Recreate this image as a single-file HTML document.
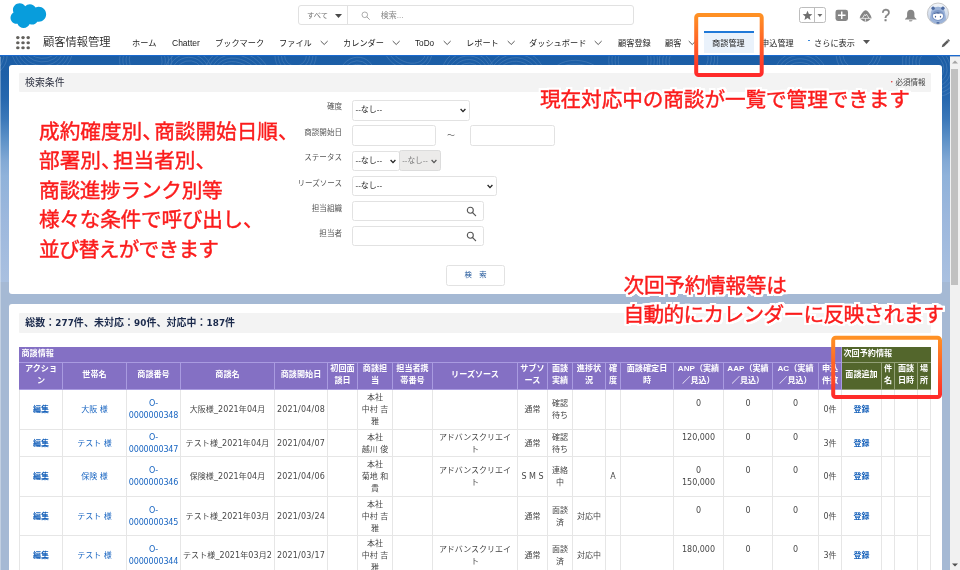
<!DOCTYPE html>
<html lang="ja">
<head>
<meta charset="utf-8">
<title>顧客情報管理</title>
<style>
*{box-sizing:border-box;margin:0;padding:0}
html,body{width:960px;height:570px;overflow:hidden;background:#a5b9d4}
body{position:relative;will-change:transform;font-family:"Liberation Sans","Noto Sans CJK JP",sans-serif;color:#333;font-size:8px}
.abs{position:absolute}
#hdr{position:absolute;left:0;top:0;width:960px;height:54.600px;background:#fff}
#brandline{position:absolute;left:0;top:54.600px;width:960px;height:1.700px;background:#1a6ad0}
#bg{position:absolute;left:0;top:56px;width:950px;height:226px;background:linear-gradient(#1b5da5 0,#1e60a8 20px,#2667ae 42px,#3b78b9 63px,#5e92c8 84px,#82a9d5 105px,#8fb2da 120px,#9db8dd 164px,#a9c0e0 226px)}
#bgpat{position:absolute;left:0;top:56px;width:950px;height:120px;opacity:.17}
.card{position:absolute;left:8.500px;width:933.500px;background:#fff;border-radius:3px}
.bar{position:absolute;left:19.200px;width:911.800px;background:#f3f3f3;border-radius:1px}
.nav{position:absolute;top:37.500px;font-size:8.2px;line-height:11px;color:#222;white-space:nowrap}
.chev{position:absolute;top:40.300px;width:8.400px;height:6.300px}
.lbl{position:absolute;width:120px;left:222px;text-align:right;font-size:7.55px;color:#565656;line-height:10px;white-space:nowrap}
.inp{position:absolute;height:20.500px;border:1px solid #e2e2e2;border-radius:2.5px;background:#fff;font-size:8px;line-height:18.500px;padding-left:2.500px;color:#222;white-space:nowrap}
.inp .ar{position:absolute;right:2.600px;top:7px;width:6px;height:5px}
.red{position:absolute;color:#fb1c1c;font-family:"Liberation Sans","Noto Sans CJK JP",sans-serif;font-weight:400;white-space:nowrap;-webkit-text-stroke:.42px #fb1c1c;filter:url(#halo)}
.red i{font-style:normal;margin-right:-.42em}
.sum b{font-size:8.800px}
.box{position:absolute;border:3.5px solid;border-image:linear-gradient(#ff8f1f,#ff2d2d) 1;border-radius:4px}
table{position:absolute;left:19px;top:346.700px;border-collapse:collapse;table-layout:fixed;width:912px;font-family:"DejaVu Sans","Noto Sans CJK JP",sans-serif;font-size:8px;line-height:12px}
td,th{border:1px solid #e6e6e6;text-align:center;vertical-align:middle;overflow:hidden;padding:1.400px 0 0;font-weight:400;color:#484848;white-space:nowrap}
td:nth-child(3){letter-spacing:-.15px}td:nth-child(4){letter-spacing:.1px}td:nth-child(5){letter-spacing:.2px}
th{background:#8470c4;color:#fff;font-weight:700;font-family:"Liberation Sans","Noto Sans CJK JP",sans-serif;border-color:#a99be0;font-size:8.1px;line-height:12.2px;padding:0}
th.g{background:#53662c;border-color:#93a077}
tr.h1 th{text-align:left;padding-left:1.500px;height:15px;padding-bottom:2px}
tr.h2 th{padding-bottom:1px}
tr.h1 th{border-top-color:#8470c4}tr.h1 th.g{border-top-color:#53662c;border-right-color:#53662c}th:first-child{border-left-color:#8470c4}tr.h2 th:last-child{border-right-color:#53662c}
a{color:#1a66c2;text-decoration:none}
td.b a{font-weight:700;color:#1560ba}
td.n{vertical-align:top;padding-top:5px}
</style>
</head>
<body>
<svg width="0" height="0" style="position:absolute"><defs><filter id="halo" x="-5%" y="-15%" width="110%" height="130%" color-interpolation-filters="sRGB"><feMorphology in="SourceAlpha" operator="dilate" radius="1.900" result="d"/><feGaussianBlur in="d" stdDeviation=".75" result="b"/><feComponentTransfer in="b" result="b2"><feFuncA type="linear" slope="1.600" intercept="0"/></feComponentTransfer><feFlood flood-color="#fff"/><feComposite in2="b2" operator="in" result="h"/><feMerge><feMergeNode in="h"/><feMergeNode in="SourceGraphic"/></feMerge></filter></defs></svg>
<div id="bg"></div>
<svg id="bgpat" width="950" height="120" viewBox="0 0 950 120" fill="none" stroke="#fff" stroke-width=".7"><ellipse cx="-10.3" cy="-2.5" rx="10.9" ry="13.4" transform="rotate(-11 -10.3 -2.5)"/><ellipse cx="-10.3" cy="-2.5" rx="14.1" ry="17.0" transform="rotate(-11 -10.3 -2.5)"/><ellipse cx="-10.3" cy="-2.5" rx="17.3" ry="20.6" transform="rotate(-11 -10.3 -2.5)"/><ellipse cx="42.0" cy="-8.1" rx="15.0" ry="10.4" transform="rotate(4 42.0 -8.1)"/><ellipse cx="42.0" cy="-8.1" rx="18.2" ry="14.0" transform="rotate(4 42.0 -8.1)"/><ellipse cx="42.0" cy="-8.1" rx="21.4" ry="17.6" transform="rotate(4 42.0 -8.1)"/><ellipse cx="42.0" cy="-8.1" rx="24.6" ry="21.2" transform="rotate(4 42.0 -8.1)"/><ellipse cx="42.0" cy="-8.1" rx="27.8" ry="24.8" transform="rotate(4 42.0 -8.1)"/><ellipse cx="42.0" cy="-8.1" rx="31.0" ry="28.4" transform="rotate(4 42.0 -8.1)"/><ellipse cx="90.5" cy="37.4" rx="16.9" ry="12.0" transform="rotate(38 90.5 37.4)"/><ellipse cx="90.5" cy="37.4" rx="20.1" ry="15.6" transform="rotate(38 90.5 37.4)"/><ellipse cx="90.5" cy="37.4" rx="23.3" ry="19.2" transform="rotate(38 90.5 37.4)"/><ellipse cx="145.7" cy="4.5" rx="16.5" ry="13.7" transform="rotate(5 145.7 4.5)"/><ellipse cx="145.7" cy="4.5" rx="19.7" ry="17.3" transform="rotate(5 145.7 4.5)"/><ellipse cx="145.7" cy="4.5" rx="22.9" ry="20.9" transform="rotate(5 145.7 4.5)"/><ellipse cx="145.7" cy="4.5" rx="26.1" ry="24.5" transform="rotate(5 145.7 4.5)"/><ellipse cx="188.5" cy="18.6" rx="14.5" ry="13.5" transform="rotate(-35 188.5 18.6)"/><ellipse cx="188.5" cy="18.6" rx="17.7" ry="17.1" transform="rotate(-35 188.5 18.6)"/><ellipse cx="188.5" cy="18.6" rx="20.9" ry="20.7" transform="rotate(-35 188.5 18.6)"/><ellipse cx="188.5" cy="18.6" rx="24.1" ry="24.3" transform="rotate(-35 188.5 18.6)"/><ellipse cx="238.3" cy="24.0" rx="19.3" ry="12.7" transform="rotate(34 238.3 24.0)"/><ellipse cx="238.3" cy="24.0" rx="22.5" ry="16.3" transform="rotate(34 238.3 24.0)"/><ellipse cx="238.3" cy="24.0" rx="25.7" ry="19.9" transform="rotate(34 238.3 24.0)"/><ellipse cx="238.3" cy="24.0" rx="28.9" ry="23.5" transform="rotate(34 238.3 24.0)"/><ellipse cx="238.3" cy="24.0" rx="32.1" ry="27.1" transform="rotate(34 238.3 24.0)"/><ellipse cx="238.3" cy="24.0" rx="35.3" ry="30.7" transform="rotate(34 238.3 24.0)"/><ellipse cx="295.5" cy="-1.0" rx="11.0" ry="11.0" transform="rotate(-0 295.5 -1.0)"/><ellipse cx="295.5" cy="-1.0" rx="14.2" ry="14.6" transform="rotate(-0 295.5 -1.0)"/><ellipse cx="295.5" cy="-1.0" rx="17.4" ry="18.2" transform="rotate(-0 295.5 -1.0)"/><ellipse cx="295.5" cy="-1.0" rx="20.6" ry="21.8" transform="rotate(-0 295.5 -1.0)"/><ellipse cx="356.8" cy="20.4" rx="11.4" ry="12.2" transform="rotate(21 356.8 20.4)"/><ellipse cx="356.8" cy="20.4" rx="14.6" ry="15.8" transform="rotate(21 356.8 20.4)"/><ellipse cx="356.8" cy="20.4" rx="17.8" ry="19.4" transform="rotate(21 356.8 20.4)"/><ellipse cx="407.5" cy="-8.0" rx="19.2" ry="13.7" transform="rotate(30 407.5 -8.0)"/><ellipse cx="407.5" cy="-8.0" rx="22.4" ry="17.3" transform="rotate(30 407.5 -8.0)"/><ellipse cx="407.5" cy="-8.0" rx="25.6" ry="20.9" transform="rotate(30 407.5 -8.0)"/><ellipse cx="468.1" cy="19.7" rx="10.8" ry="8.9" transform="rotate(-18 468.1 19.7)"/><ellipse cx="468.1" cy="19.7" rx="14.0" ry="12.5" transform="rotate(-18 468.1 19.7)"/><ellipse cx="468.1" cy="19.7" rx="17.2" ry="16.1" transform="rotate(-18 468.1 19.7)"/><ellipse cx="468.1" cy="19.7" rx="20.4" ry="19.7" transform="rotate(-18 468.1 19.7)"/><ellipse cx="468.1" cy="19.7" rx="23.6" ry="23.3" transform="rotate(-18 468.1 19.7)"/><ellipse cx="468.1" cy="19.7" rx="26.8" ry="26.9" transform="rotate(-18 468.1 19.7)"/><ellipse cx="515.1" cy="26.6" rx="17.8" ry="17.9" transform="rotate(26 515.1 26.6)"/><ellipse cx="515.1" cy="26.6" rx="21.0" ry="21.5" transform="rotate(26 515.1 26.6)"/><ellipse cx="515.1" cy="26.6" rx="24.2" ry="25.1" transform="rotate(26 515.1 26.6)"/><ellipse cx="515.1" cy="26.6" rx="27.4" ry="28.7" transform="rotate(26 515.1 26.6)"/><ellipse cx="515.1" cy="26.6" rx="30.6" ry="32.3" transform="rotate(26 515.1 26.6)"/><ellipse cx="578.3" cy="23.4" rx="21.3" ry="11.6" transform="rotate(9 578.3 23.4)"/><ellipse cx="578.3" cy="23.4" rx="24.5" ry="15.2" transform="rotate(9 578.3 23.4)"/><ellipse cx="578.3" cy="23.4" rx="27.7" ry="18.8" transform="rotate(9 578.3 23.4)"/><ellipse cx="633.1" cy="4.4" rx="14.8" ry="17.2" transform="rotate(-0 633.1 4.4)"/><ellipse cx="633.1" cy="4.4" rx="18.0" ry="20.8" transform="rotate(-0 633.1 4.4)"/><ellipse cx="633.1" cy="4.4" rx="21.2" ry="24.4" transform="rotate(-0 633.1 4.4)"/><ellipse cx="633.1" cy="4.4" rx="24.4" ry="28.0" transform="rotate(-0 633.1 4.4)"/><ellipse cx="688.6" cy="3.9" rx="19.8" ry="16.6" transform="rotate(-18 688.6 3.9)"/><ellipse cx="688.6" cy="3.9" rx="23.0" ry="20.2" transform="rotate(-18 688.6 3.9)"/><ellipse cx="688.6" cy="3.9" rx="26.2" ry="23.8" transform="rotate(-18 688.6 3.9)"/><ellipse cx="688.6" cy="3.9" rx="29.4" ry="27.4" transform="rotate(-18 688.6 3.9)"/><ellipse cx="744.8" cy="34.2" rx="11.8" ry="9.8" transform="rotate(-21 744.8 34.2)"/><ellipse cx="744.8" cy="34.2" rx="15.0" ry="13.4" transform="rotate(-21 744.8 34.2)"/><ellipse cx="744.8" cy="34.2" rx="18.2" ry="17.0" transform="rotate(-21 744.8 34.2)"/><ellipse cx="744.8" cy="34.2" rx="21.4" ry="20.6" transform="rotate(-21 744.8 34.2)"/><ellipse cx="800.5" cy="19.5" rx="13.4" ry="9.5" transform="rotate(3 800.5 19.5)"/><ellipse cx="800.5" cy="19.5" rx="16.6" ry="13.1" transform="rotate(3 800.5 19.5)"/><ellipse cx="800.5" cy="19.5" rx="19.8" ry="16.7" transform="rotate(3 800.5 19.5)"/><ellipse cx="800.5" cy="19.5" rx="23.0" ry="20.3" transform="rotate(3 800.5 19.5)"/><ellipse cx="800.5" cy="19.5" rx="26.2" ry="23.9" transform="rotate(3 800.5 19.5)"/><ellipse cx="858.8" cy="-3.7" rx="15.5" ry="16.7" transform="rotate(36 858.8 -3.7)"/><ellipse cx="858.8" cy="-3.7" rx="18.7" ry="20.3" transform="rotate(36 858.8 -3.7)"/><ellipse cx="858.8" cy="-3.7" rx="21.9" ry="23.9" transform="rotate(36 858.8 -3.7)"/><ellipse cx="931.5" cy="9.9" rx="11.2" ry="14.3" transform="rotate(-35 931.5 9.9)"/><ellipse cx="931.5" cy="9.9" rx="14.4" ry="17.9" transform="rotate(-35 931.5 9.9)"/><ellipse cx="931.5" cy="9.9" rx="17.6" ry="21.5" transform="rotate(-35 931.5 9.9)"/><ellipse cx="931.5" cy="9.9" rx="20.8" ry="25.1" transform="rotate(-35 931.5 9.9)"/><ellipse cx="931.5" cy="9.9" rx="24.0" ry="28.7" transform="rotate(-35 931.5 9.9)"/><ellipse cx="931.5" cy="9.9" rx="27.2" ry="32.3" transform="rotate(-35 931.5 9.9)"/></svg>
<div id="hdr"></div>
<div id="brandline"></div>


<!-- header -->
<svg class="abs" style="left:9.900px;top:1.900px" width="37.050" height="26.300" viewBox="0 0 38 27"><path fill="#089ddc" d="M15.6 4.3c1.2-1.3 2.9-2.1 4.8-2.1 2.5 0 4.7 1.4 5.8 3.4 1-.4 2.1-.7 3.200-.7 4.300 0 7.700 3.400 7.700 7.700s-3.400 7.700-7.700 7.700c-.5 0-1-.05-1.500-.15-1 1.800-2.900 3-5.100 3-.9 0-1.800-.2-2.600-.6-1 2.400-3.400 4.100-6.200 4.100-2.900 0-5.400-1.800-6.300-4.400-.4.100-.85.130-1.300.130C3.200 22.380.5 19.600.5 16.200c0-2.300 1.200-4.300 3.100-5.400-.4-.9-.6-1.800-.6-2.800C3 4.300 6.100 1.300 9.900 1.300c2.300 0 4.400 1.200 5.700 3z"/></svg>

<div class="abs" style="left:298px;top:5px;width:336px;height:20.400px;border:1px solid #e1e1e1;border-radius:3px;background:#fff"></div>
<div class="abs" style="left:347px;top:5px;width:1px;height:20.400px;background:#e1e1e1"></div>
<div class="abs" style="left:307px;top:10.700px;font-size:7.3px;line-height:10px;color:#6f6f6f;white-space:nowrap">すべて</div>
<svg class="abs" style="left:334.800px;top:13.700px" width="7" height="4" viewBox="0 0 7 4"><path d="M0 0h7L3.500 4z" fill="#4a4a4a"/></svg>
<svg class="abs" style="left:360.600px;top:10.800px" width="10" height="10" viewBox="0 0 10 10"><circle cx="3.800" cy="3.800" r="2.800" fill="none" stroke="#a3a3a3" stroke-width=".9"/><path d="M5.900 5.900L8.400 8.400" stroke="#a3a3a3" stroke-width="1" stroke-linecap="round"/></svg>
<div class="abs" style="left:380.700px;top:10.700px;font-size:8px;line-height:10px;color:#858585;white-space:nowrap">検索...</div>

<!-- right icons -->
<div class="abs" style="left:799px;top:7px;width:26.500px;height:15.500px;border:1px solid #bdbdbd;border-radius:2.500px;background:#fff"></div>
<div class="abs" style="left:814px;top:7px;width:1px;height:15.500px;background:#bdbdbd"></div>
<svg class="abs" style="left:801.700px;top:10.300px" width="11" height="11" viewBox="0 0 12 12"><path fill="#6e6e6e" d="M6 .8l1.500 3.500 3.800.3-2.900 2.500.9 3.700L6 8.800 2.700 10.800l.9-3.700L.7 4.600l3.800-.3z"/></svg>
<svg class="abs" style="left:816.800px;top:14.400px" width="5.800" height="3.300" viewBox="0 0 6 4"><path d="M0 0h6L3 3.600z" fill="#6e6e6e"/></svg>
<svg class="abs" style="left:835px;top:9px" width="14" height="13" viewBox="0 0 14 13"><rect x=".5" y=".7" width="12.500" height="11.200" rx="2.300" fill="#868686"/><path d="M6.750 2.500v7.600M2.950 6.300h7.600" stroke="#fff" stroke-width="1.450"/></svg>
<svg class="abs" style="left:859px;top:9.500px" width="14" height="12.500" viewBox="0 0 14 12.500"><path fill="#868686" d="M6.650 .2C8.500 .2 12.500 5.500 12.500 8c0 .6-.3.900-.7 1.100C10 10.600 8.300 11.800 6.650 11.800S3.300 10.600 1.500 9.100C1.100 8.900.8 8.600.8 8 .8 5.500 4.800.2 6.650.2z"/><path d="M1 8.350h11.300M3.500 8.100l2.100-3.500.85 1.200 1-1.700 2.450 4M6.400 8.400v3.200" fill="none" stroke="#fff" stroke-width=".75" stroke-linejoin="round"/></svg>
<div class="abs" style="left:879.800px;top:7.300px;width:12px;text-align:center;font-size:15.500px;line-height:17px;color:#828282;-webkit-text-stroke:.35px #828282;transform:scaleY(1.080);transform-origin:50% 85%;font-family:'Liberation Sans',sans-serif">?</div>
<svg class="abs" style="left:904px;top:9px" width="14" height="13" viewBox="0 0 14 13"><path fill="#868686" d="M6.750 .7C9 .7 10.400 2.400 10.400 4.600V7c0 1.400.9 2.200 2.100 2.900v.7H1v-.7C2.200 9.200 3.100 8.400 3.100 7V4.600C3.100 2.400 4.500.7 6.750.7zM5 11.200h3.500c0 .8-.8 1.200-1.750 1.200S5 12 5 11.200z"/></svg>
<svg class="abs" style="left:926px;top:2px" width="24" height="24" viewBox="0 0 24 24"><defs><clipPath id="avc"><circle cx="12" cy="11.600" r="10.200"/></clipPath><linearGradient id="avg" x1="0" y1="0" x2="0" y2="1"><stop offset="0" stop-color="#f4f7fb"/><stop offset=".5" stop-color="#d5dfee"/><stop offset="1" stop-color="#c3d0e4"/></linearGradient></defs><circle cx="12" cy="11.600" r="10.600" fill="url(#avg)" stroke="#b3b3b3" stroke-width=".7"/><g clip-path="url(#avc)"><path d="M4.600 24c-.8-4-.9-8 .2-12 .1-4.500 3-7.300 7.200-7.300s7.100 2.800 7.200 7.300c1.100 4 1 8 .2 12z" fill="#9cb3d8"/><circle cx="7.100" cy="6.200" r="1.700" fill="#4d6aa0"/><circle cx="16.900" cy="6.200" r="1.700" fill="#4d6aa0"/><ellipse cx="12" cy="13.500" rx="6.300" ry="5.400" fill="#7e99c8"/><ellipse cx="12" cy="14.100" rx="5.100" ry="3.900" fill="#fff"/><path d="M7.300 12.400c.8-3 7.400-3.600 9.400 0-1.200-1-1.900-.3-2.600-1.100-.8.900-1.600 0-2.300.6-.8-.8-1.700.4-2.400-.3-.6.800-1.400.2-2.100.8z" fill="#4d6aa0"/><ellipse cx="9.500" cy="14.700" rx=".65" ry=".85" fill="#3f5a8e"/><ellipse cx="14.500" cy="14.700" rx=".65" ry=".85" fill="#3f5a8e"/><ellipse cx="12" cy="21.300" rx="1.700" ry="1.300" fill="#4d6aa0"/></g></svg>

<!-- nav -->
<svg class="abs" style="left:15.800px;top:35.500px" width="14" height="14" viewBox="0 0 14 14" fill="#63615d"><ellipse cx="1.800" cy="1.600" rx="1.750" ry="1.550"/><ellipse cx="7" cy="1.600" rx="1.750" ry="1.550"/><ellipse cx="12.200" cy="1.600" rx="1.750" ry="1.550"/><ellipse cx="1.800" cy="6.700" rx="1.750" ry="1.550"/><ellipse cx="7" cy="6.700" rx="1.750" ry="1.550"/><ellipse cx="12.200" cy="6.700" rx="1.750" ry="1.550"/><ellipse cx="1.800" cy="11.800" rx="1.750" ry="1.550"/><ellipse cx="7" cy="11.800" rx="1.750" ry="1.550"/><ellipse cx="12.200" cy="11.800" rx="1.750" ry="1.550"/></svg>
<div class="abs" style="left:43px;top:34px;font-size:11.25px;line-height:16px;color:#2b2b2b;font-weight:350;white-space:nowrap">顧客情報管理</div>
<div class="abs" style="left:704px;top:31px;width:50px;height:22px;background:#eaf2fb;border-top:2px solid #2079d8"></div>
<div class="nav" style="left:132px">ホーム</div>
<div class="nav" style="left:172px;font-size:8.5px">Chatter</div>
<div class="nav" style="left:215px">ブックマーク</div>
<div class="nav" style="left:279px">ファイル</div>
<div class="nav" style="left:343px">カレンダー</div>
<div class="nav" style="left:415px;font-size:8.2px">ToDo</div>
<div class="nav" style="left:466px">レポート</div>
<div class="nav" style="left:529px">ダッシュボード</div>
<div class="nav" style="left:618px">顧客登録</div>
<div class="nav" style="left:665px">顧客</div>
<div class="nav" style="left:712px">商談管理</div>
<div class="nav" style="left:761px">申込管理</div>
<div class="abs" style="left:807.900px;top:39.600px;width:1.700px;height:1.700px;border-radius:50%;background:#2079d8"></div>
<div class="nav" style="left:814px">さらに表示</div>
<svg class="abs" style="left:862.800px;top:40.400px" width="7" height="4.400" viewBox="0 0 8 5"><path d="M0 0h8L4 4.600z" fill="#555"/></svg>
<svg class="abs" style="left:940.800px;top:37.500px" width="10" height="10" viewBox="0 0 10 10"><path d="M.7 9.300l.7-2.500L7.200.9l1.800 1.800L3.200 8.600z" fill="#5c5c5c"/><path d="M6.300 2.100l1.700 1.700" stroke="#fff" stroke-width=".5"/></svg>
<svg class="chev" style="left:320px" viewBox="0 0 8 6"><path d="M.7 1L4 4.300 7.300 1" fill="none" stroke="#555" stroke-width=".95"/></svg>
<svg class="chev" style="left:392px" viewBox="0 0 8 6"><path d="M.7 1L4 4.300 7.300 1" fill="none" stroke="#555" stroke-width=".95"/></svg>
<svg class="chev" style="left:443px" viewBox="0 0 8 6"><path d="M.7 1L4 4.300 7.300 1" fill="none" stroke="#555" stroke-width=".95"/></svg>
<svg class="chev" style="left:507px" viewBox="0 0 8 6"><path d="M.7 1L4 4.300 7.300 1" fill="none" stroke="#555" stroke-width=".95"/></svg>
<svg class="chev" style="left:594px" viewBox="0 0 8 6"><path d="M.7 1L4 4.300 7.300 1" fill="none" stroke="#555" stroke-width=".95"/></svg>
<svg class="chev" style="left:688px" viewBox="0 0 8 6"><path d="M.7 1L4 4.300 7.300 1" fill="none" stroke="#555" stroke-width=".95"/></svg>

<!-- cards -->
<div class="abs" style="left:0;top:56.500px;width:1.200px;height:514px;background:rgba(255,255,255,.33)"></div>
<div class="card" style="top:65.300px;height:228.400px"></div>
<div class="card" style="top:304.200px;height:280px"></div>
<div class="bar" style="top:73.200px;height:19.300px"></div>
<div class="bar" style="top:313px;height:20px"></div>

<div class="abs" style="left:25px;top:76.200px;font-size:9.900px;line-height:13px;color:#2e3242">検索条件</div>
<div class="abs" style="left:888px;top:78px;font-size:7.5px;line-height:9px;color:#444;white-space:nowrap;letter-spacing:0"><span style="color:#d33">・</span>必須情報</div>
<div class="abs sum" style="left:25.200px;top:315.600px;font-size:9.950px;letter-spacing:.08px;line-height:14px;color:#1b2a4c;font-weight:700;white-space:nowrap;font-family:'DejaVu Sans','Noto Sans CJK JP',sans-serif">総数：<b>277</b>件、未対応：<b>90</b>件、対応中：<b>187</b>件</div>


<!-- form -->
<div class="lbl" style="top:102px">確度</div>
<div class="lbl" style="top:128px">商談開始日</div>
<div class="lbl" style="top:153px">ステータス</div>
<div class="lbl" style="top:179px">リーズソース</div>
<div class="lbl" style="top:204px">担当組織</div>
<div class="lbl" style="top:229px">担当者</div>

<div class="inp" style="left:352px;top:100px;width:118px">--なし--<svg class="ar" viewBox="0 0 6 5"><path d="M.6 1l2.400 2.600L5.400 1" fill="none" stroke="#222" stroke-width="1.300"/></svg></div>
<div class="inp" style="left:352px;top:125px;width:84px"></div>
<div class="abs" style="left:447px;top:131px;font-size:8px;line-height:10px;color:#666">～</div>
<div class="inp" style="left:470px;top:125px;width:85px"></div>
<div class="inp" style="left:352px;top:151px;width:48px;height:20px;line-height:18px">--なし--<svg class="ar" viewBox="0 0 6 5"><path d="M.6 1l2.400 2.600L5.400 1" fill="none" stroke="#222" stroke-width="1.300"/></svg></div>
<div class="inp" style="left:399px;top:150px;width:42px;height:21px;background:#ecebea;border-color:#dcdcdc;color:#7a7a7a;padding-left:2.300px;line-height:19px;font-size:7.700px">--なし--<svg class="ar" style="top:8px" viewBox="0 0 6 5"><path d="M.6 1l2.400 2.600L5.400 1" fill="none" stroke="#555" stroke-width="1.200"/></svg></div>
<div class="inp" style="left:352px;top:176px;width:145px;height:19.800px;line-height:18px">--なし--<svg class="ar" viewBox="0 0 6 5"><path d="M.6 1l2.400 2.600L5.400 1" fill="none" stroke="#222" stroke-width="1.300"/></svg></div>
<div class="inp" style="left:352px;top:201px;width:132px;height:19.800px"></div>
<div class="inp" style="left:352px;top:226.200px;width:132px;height:19.600px"></div>
<svg class="abs" style="left:466px;top:206px" width="11" height="11" viewBox="0 0 11 11"><circle cx="4.300" cy="4.300" r="3" fill="none" stroke="#555" stroke-width="1.100"/><path d="M6.600 6.600L9.600 9.600" stroke="#555" stroke-width="1.300" stroke-linecap="round"/></svg>
<svg class="abs" style="left:466px;top:231px" width="11" height="11" viewBox="0 0 11 11"><circle cx="4.300" cy="4.300" r="3" fill="none" stroke="#555" stroke-width="1.100"/><path d="M6.600 6.600L9.600 9.600" stroke="#555" stroke-width="1.300" stroke-linecap="round"/></svg>
<div class="inp" style="left:446px;top:265px;width:59px;text-align:center;padding:0;color:#1b5297;font-size:7.4px">検　索</div>

<!-- annotations -->
<div class="red" style="left:39px;top:116.700px;font-size:20.650px;line-height:29.500px">成約確度別<i>、</i>商談開始日順<i>、</i><br>部署別<i>、</i>担当者別<i>、</i><br><span style="letter-spacing:-.25px">商談進捗ランク別等</span><br><span style="letter-spacing:-.24px">様々な条件で呼び出し<i>、</i></span><br><span style="letter-spacing:-.72px">並び替えができます</span></div>
<div class="red" style="left:540px;top:84.800px;font-size:20.650px;line-height:30px;letter-spacing:-.09px">現在対応中の商談が一覧で管理できます</div>
<div class="red" style="left:623.500px;top:270.700px;font-size:20.650px;line-height:29.500px"><span style="letter-spacing:-.25px">次回予約情報等は</span><br><span style="letter-spacing:-.65px">自動的にカレンダーに反映されます</span></div>

<!-- scrollbar -->
<div class="abs" style="left:949.800px;top:57px;width:10.200px;height:513px;background:#f1f1f1"></div>
<div class="abs" style="left:951px;top:68.500px;width:7.200px;height:216px;background:#c1c1c1"></div>
<svg class="abs" style="left:952px;top:60px" width="6" height="4" viewBox="0 0 6 4"><path d="M0 3.600L3 .4l3 3.200z" fill="#a3a3a3"/></svg>
<svg class="abs" style="left:952px;top:563px" width="6" height="4" viewBox="0 0 6 4"><path d="M0 .4L3 3.600 6 .4z" fill="#505050"/></svg>

<table><colgroup><col style="width:43px"><col style="width:64px"><col style="width:54px"><col style="width:94px"><col style="width:53px"><col style="width:30px"><col style="width:35px"><col style="width:40px"><col style="width:85px"><col style="width:30px"><col style="width:25px"><col style="width:33px"><col style="width:15px"><col style="width:53px"><col style="width:50px"><col style="width:49px"><col style="width:46px"><col style="width:23px"><col style="width:40px"><col style="width:13px"><col style="width:23px"><col style="width:13px"></colgroup>
<tr class="h1"><th colspan="18">商談情報</th><th class="g" colspan="4">次回予約情報</th></tr>
<tr class="h2" style="height:27px"><th>アクショ<br>ン</th><th>世帯名</th><th>商談番号</th><th>商談名</th><th>商談開始日</th><th>初回面<br>談日</th><th>商談担<br>当</th><th>担当者携<br>帯番号</th><th>リーズソース</th><th>サブソ<br>ース</th><th>面談<br>実績</th><th>進捗状<br>況</th><th>確<br>度</th><th>面談確定日<br>時</th><th>ANP（実績<br>／見込）</th><th>AAP（実績<br>／見込）</th><th>AC（実績<br>／見込）</th><th>申込<br>件数</th><th class=g>面談追加</th><th class=g>件<br>名</th><th class=g>面談<br>日時</th><th class=g>場<br>所</th></tr>
<tr style="height:40px"><td class="b"><a>編集</a></td><td><a>大阪 様</a></td><td><a>O-<br>0000000348</a></td><td>大阪様_2021年04月</td><td>2021/04/08</td><td></td><td>本社<br>中村 吉<br>雅</td><td></td><td></td><td>通常</td><td>確認<br>待ち</td><td></td><td></td><td></td><td>0<br>&nbsp;</td><td>0<br>&nbsp;</td><td>0<br>&nbsp;</td><td>0件</td><td class="b"><a>登録</a></td><td></td><td></td><td></td></tr>
<tr style="height:27px"><td class="b"><a>編集</a></td><td><a>テスト 様</a></td><td><a>O-<br>0000000347</a></td><td>テスト様_2021年04月</td><td>2021/04/07</td><td></td><td>本社<br>越川 俊</td><td></td><td>アドバンスクリエイ<br>ト</td><td>通常</td><td>確認<br>待ち</td><td></td><td></td><td></td><td>120,000<br>&nbsp;</td><td>0<br>&nbsp;</td><td>0<br>&nbsp;</td><td>3件</td><td class="b"><a>登録</a></td><td></td><td></td><td></td></tr>
<tr style="height:40px"><td class="b"><a>編集</a></td><td><a>保険 様</a></td><td><a>O-<br>0000000346</a></td><td>保険様_2021年04月</td><td>2021/04/06</td><td></td><td>本社<br>菊地 和<br>貴</td><td></td><td>アドバンスクリエイ<br>ト</td><td>S M S</td><td>連絡<br>中</td><td></td><td>A</td><td></td><td>0<br>150,000</td><td>0<br>&nbsp;</td><td>0<br>&nbsp;</td><td>0件</td><td class="b"><a>登録</a></td><td></td><td></td><td></td></tr>
<tr style="height:39px"><td class="b"><a>編集</a></td><td><a>テスト 様</a></td><td><a>O-<br>0000000345</a></td><td>テスト様_2021年03月</td><td>2021/03/24</td><td></td><td>本社<br>中村 吉<br>雅</td><td></td><td></td><td>通常</td><td>面談<br>済</td><td>対応中</td><td></td><td></td><td>0<br>&nbsp;</td><td>0<br>&nbsp;</td><td>0<br>&nbsp;</td><td>0件</td><td class="b"><a>登録</a></td><td></td><td></td><td></td></tr>
<tr style="height:40px"><td class="b"><a>編集</a></td><td><a>テスト 様</a></td><td><a>O-<br>0000000344</a></td><td>テスト様_2021年03月2</td><td>2021/03/17</td><td></td><td>本社<br>中村 吉<br>雅</td><td></td><td>アドバンスクリエイ<br>ト</td><td>通常</td><td>面談<br>済</td><td>対応中</td><td></td><td></td><td>180,000<br>&nbsp;</td><td>0<br>&nbsp;</td><td>0<br>&nbsp;</td><td>3件</td><td class="b"><a>登録</a></td><td></td><td></td><td></td></tr>
</table>

<svg class="abs" style="left:690px;top:10px" width="80" height="70" viewBox="0 0 80 70"><defs><linearGradient id="og" x1="0" y1="0" x2="0" y2="1"><stop offset="0" stop-color="#ff9124"/><stop offset="1" stop-color="#ff2a2a"/></linearGradient></defs><rect x="6.200" y="4.900" width="65.500" height="60.100" rx="2.500" fill="none" stroke="url(#og)" stroke-width="4"/></svg>
<svg class="abs" style="left:828px;top:332px" width="120" height="70" viewBox="0 0 120 70"><rect x="5.200" y="5.700" width="106.800" height="59.400" rx="2.500" fill="none" stroke="url(#og)" stroke-width="4"/></svg>

</body>
</html>
